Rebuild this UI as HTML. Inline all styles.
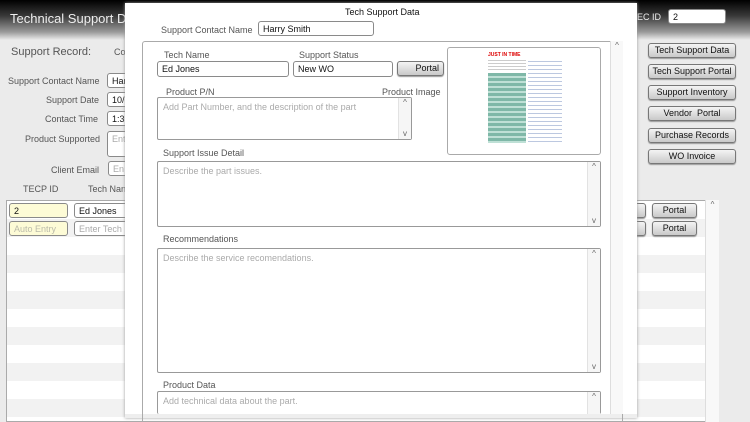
<!DOCTYPE html>
<html><head><style>
*{box-sizing:border-box;margin:0;padding:0}
body{width:750px;height:422px;overflow:hidden;position:relative;background:#ebebeb;font-family:"Liberation Sans",sans-serif;font-size:9px;color:#333}
.a{position:absolute}
.hdr{left:0;top:0;width:750px;height:40px;background:linear-gradient(#000 0%,#3a3a3a 40%,#9a9a9a 80%,#ebebeb 100%)}
.in{position:absolute;background:#fff;border:1px solid #8a8a8a;border-radius:3px;padding:2px 4px;font-size:9px;color:#111;white-space:nowrap;overflow:hidden}
.ph{color:#aaa}
.lbl{position:absolute;color:#555;font-size:9px;white-space:nowrap}
.btn{position:absolute;background:linear-gradient(#f4f4f4,#c9c9c9);border:1px solid #777;border-radius:3px;font-size:9px;color:#111;text-align:center;line-height:13px;box-shadow:0 1px 1px #999}
.ta{position:absolute;background:#fff;border:1px solid #999;border-radius:2px;color:#aaa;padding:4px 5px;font-size:9px}
.sb{position:absolute;right:0;top:0;bottom:0;width:13px;border-left:1px solid #e2e2e2;background:#f6f6f6;font-size:8px;color:#666;text-align:center}
</style></head><body>
<div class="a hdr"></div>
<div class="a" style="left:10px;top:11px;color:#eee;font-size:13px">Technical Support D</div>
<div class="a" style="left:637px;top:12px;color:#eee;font-size:9px">EC ID</div>
<div class="in" style="left:668px;top:9px;width:58px;height:15px">2</div>
<div class="lbl" style="left:11px;top:46px;font-size:11px">Support Record:</div>
<div class="lbl" style="left:114px;top:47px">Co</div>
<div class="lbl" style="left:8px;top:76px">Support Contact Name</div>
<div class="lbl" style="left:46px;top:95px">Support Date</div>
<div class="lbl" style="left:45px;top:114px">Contact Time</div>
<div class="lbl" style="left:25px;top:134px">Product Supported</div>
<div class="lbl" style="left:51px;top:165px">Client Email</div>
<div class="in" style="left:107px;top:73px;width:30px;height:15px">Har</div>
<div class="in" style="left:107px;top:92px;width:30px;height:15px">10/</div>
<div class="in" style="left:107px;top:111px;width:30px;height:15px">1:3</div>
<div class="in ph" style="left:107px;top:131px;width:30px;height:26px">Ent</div>
<div class="in ph" style="left:108px;top:161px;width:30px;height:15px">En</div>
<div class="lbl" style="left:23px;top:184px">TECP ID</div>
<div class="lbl" style="left:88px;top:184px">Tech Nan</div>
<div class="a" style="left:6px;top:200px;width:713px;height:222px;background:repeating-linear-gradient(#fff 0 18px,#f2f2f2 18px 36px);border:1px solid #aaa"></div>
<div class="a" style="left:705px;top:200px;width:14px;height:222px;border-left:1px solid #ddd;background:#f8f8f8;font-size:8px;text-align:center;color:#666">^</div>
<div class="in" style="left:9px;top:203px;width:59px;height:15px;background:#fdfbd6">2</div>
<div class="in" style="left:74px;top:203px;width:60px;height:15px">Ed Jones</div>
<div class="in ph" style="left:9px;top:221px;width:59px;height:15px;background:#fdfbd6;color:#bba">Auto Entry</div>
<div class="in ph" style="left:74px;top:221px;width:60px;height:15px">Enter Tech</div>
<div class="btn" style="left:630px;top:203px;width:16px;height:15px"></div>
<div class="btn" style="left:630px;top:221px;width:16px;height:15px"></div>
<div class="btn" style="left:652px;top:203px;width:45px;height:15px">Portal</div>
<div class="btn" style="left:652px;top:221px;width:45px;height:15px">Portal</div>
<div class="btn" style="left:648px;top:43px;width:88px;height:15px">Tech Support Data</div>
<div class="btn" style="left:648px;top:64px;width:88px;height:15px">Tech Support Portal</div>
<div class="btn" style="left:648px;top:85px;width:88px;height:15px">Support Inventory</div>
<div class="btn" style="left:648px;top:106px;width:88px;height:15px">Vendor &nbsp;Portal</div>
<div class="btn" style="left:648px;top:128px;width:88px;height:15px">Purchase Records</div>
<div class="btn" style="left:648px;top:149px;width:88px;height:15px">WO Invoice</div>
<!-- modal -->
<div class="a" style="left:125px;top:3px;width:512px;height:415px;background:#fff;box-shadow:0 0 3px #999;border-bottom:4px solid #eee"></div>
<div class="a" style="left:345px;top:7px;font-size:9px;color:#111">Tech Support Data</div>
<div class="lbl" style="left:161px;top:25px">Support Contact Name</div>
<div class="in" style="left:258px;top:21px;width:116px;height:15px">Harry Smith</div>
<div class="a" style="left:142px;top:41px;width:481px;height:381px;border:1px solid #aaa;border-bottom:none;border-radius:3px 3px 0 0"></div>
<div class="a" style="left:610px;top:41px;width:13px;height:373px;border-left:1px solid #ddd;background:#f8f8f8;font-size:8px;color:#666;text-align:center">^</div>
<div class="lbl" style="left:164px;top:50px">Tech Name</div>
<div class="lbl" style="left:299px;top:50px">Support Status</div>
<div class="in" style="left:157px;top:61px;width:132px;height:16px">Ed Jones</div>
<div class="in" style="left:293px;top:61px;width:100px;height:16px">New WO</div>
<div class="btn" style="left:397px;top:61px;width:47px;height:15px;text-align:right;padding-right:4px">Portal</div>
<div class="lbl" style="left:166px;top:87px">Product P/N</div>
<div class="lbl" style="left:382px;top:87px">Product Image</div>
<div class="ta" style="left:157px;top:97px;width:255px;height:43px">Add Part Number, and the description of the part<div class="sb"><div>^</div><div style="position:absolute;bottom:1px;width:12px">v</div></div></div>
<div class="a" style="left:447px;top:47px;width:154px;height:108px;border:1px solid #aaa;border-radius:3px;background:#fff">
 <div class="a" style="left:40px;top:25px;width:38px;height:70px;background:repeating-linear-gradient(#7fb8a8 0 3px,#bfe0d6 3px 5px)"></div>
 <div class="a" style="left:40px;top:10px;width:38px;height:14px;background:repeating-linear-gradient(#fff 0 2px,#ccc 2px 3px)"></div>
 <div class="a" style="left:80px;top:10px;width:34px;height:85px;background:repeating-linear-gradient(#fff 0 3px,#bcc8e0 3px 4px)"></div>
 <div class="a" style="left:40px;top:4px;font-size:5px;color:#d00;font-weight:bold">JUST IN TIME</div>
</div>
<div class="lbl" style="left:163px;top:148px">Support Issue Detail</div>
<div class="ta" style="left:157px;top:161px;width:444px;height:66px">Describe the part issues.<div class="sb"><div>^</div><div style="position:absolute;bottom:1px;width:12px">v</div></div></div>
<div class="lbl" style="left:163px;top:234px">Recommendations</div>
<div class="ta" style="left:157px;top:248px;width:444px;height:125px">Describe the service recomendations.<div class="sb"><div>^</div><div style="position:absolute;bottom:1px;width:12px">v</div></div></div>
<div class="lbl" style="left:163px;top:380px">Product Data</div>
<div class="ta" style="left:157px;top:391px;width:444px;height:23px;border-bottom:none">Add technical data about the part.<div class="sb"><div>^</div></div></div>
</body></html>
